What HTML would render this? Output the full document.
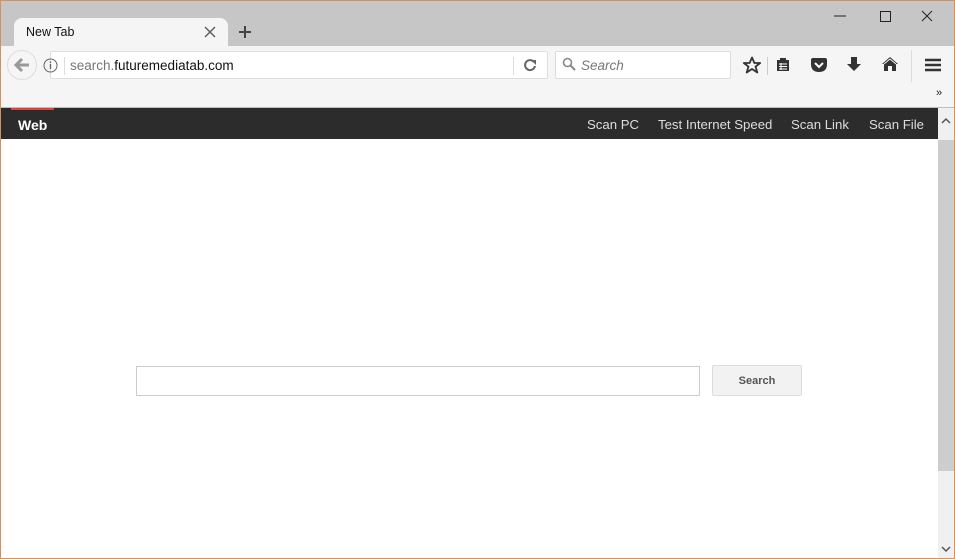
<!DOCTYPE html>
<html><head><meta charset="utf-8"><style>
*{margin:0;padding:0;box-sizing:border-box}
body{width:955px;height:559px;overflow:hidden;font-family:"Liberation Sans",sans-serif;background:#fff;position:relative}
.a{position:absolute}
.n{font-size:13.2px;color:#ddd;top:117px}
</style></head><body>
<div class="a" style="left:0;top:0;width:955px;height:46px;background:#c6c6c6"></div>
<div class="a" style="left:14px;top:18px;width:214px;height:30px;background:#f5f5f5;border-radius:8px 8px 0 0"></div>
<div class="a" style="left:26px;top:25px;font-size:12.5px;color:#111">New Tab</div>
<svg class="a" style="left:203px;top:25px" width="14" height="14"><path d="M2 2L12 12M12 2L2 12" stroke="#555" stroke-width="1.3"/></svg>
<svg class="a" style="left:237px;top:24px" width="16" height="16"><path d="M8 2V14M2 8H14" stroke="#444" stroke-width="2"/></svg>
<svg class="a" style="left:830px;top:8px" width="110" height="16"><path d="M4 8H16" stroke="#222"/><rect x="50.5" y="3.5" width="10" height="10" fill="none" stroke="#222"/><path d="M92 3L102 13M102 3L92 13" stroke="#222"/></svg>
<div class="a" style="left:0;top:46px;width:955px;height:62px;background:#f5f5f5"></div>
<div class="a" style="left:50px;top:51px;width:498px;height:28px;background:#fff;border:1px solid #ddd;border-radius:2px"></div>
<div class="a" style="left:7px;top:50px;width:30px;height:30px;border-radius:50%;background:#f5f5f5;border:1px solid #ddd"></div>
<svg class="a" style="left:13px;top:57px" width="18" height="16"><path d="M9 2L3 8L9 14M3 8H16" stroke="#999" stroke-width="3" fill="none"/></svg>
<svg class="a" style="left:43px;top:58px" width="15" height="15"><circle cx="7.5" cy="7.5" r="6.5" fill="none" stroke="#666"/><path d="M7.5 6V11M7.5 3.5V5" stroke="#666" stroke-width="1.4"/></svg>
<div class="a" style="left:64px;top:57px;width:1px;height:18px;background:#ddd"></div>
<div class="a" style="left:70px;top:58px;font-size:13.5px;color:#777">search.<span style="color:#111">futuremediatab.com</span></div>
<div class="a" style="left:513px;top:57px;width:1px;height:18px;background:#ddd"></div>
<svg class="a" style="left:523px;top:58px" width="14" height="14"><path d="M11 4A5 5 0 1 0 12 8" stroke="#666" stroke-width="2" fill="none"/><path d="M8 2H13V7Z" fill="#666"/></svg>
<div class="a" style="left:555px;top:51px;width:176px;height:28px;background:#fff;border:1px solid #ddd;border-radius:2px"></div>
<svg class="a" style="left:562px;top:57px" width="14" height="14"><circle cx="5.5" cy="5.5" r="4" fill="none" stroke="#888" stroke-width="1.6"/><path d="M8.5 8.5L13 13" stroke="#888" stroke-width="2"/></svg>
<div class="a" style="left:581px;top:58px;font-size:13.5px;color:#777;font-style:italic">Search</div>
<svg class="a" style="left:742px;top:56px" width="20" height="19"><path d="M10 1.5L12.4 7H18.2L13.5 10.6L15.3 16.5L10 13L4.7 16.5L6.5 10.6L1.8 7H7.6Z" fill="none" stroke="#333" stroke-width="1.8" stroke-linejoin="round"/></svg>
<div class="a" style="left:767px;top:57px;width:1px;height:18px;background:#ccc"></div>
<svg class="a" style="left:775px;top:57px" width="16" height="16"><rect x="2" y="3" width="12" height="11" fill="#333"/><rect x="5" y="1" width="6" height="3" fill="#333"/><path d="M4 7H12M4 9.5H12M4 12H12" stroke="#fff"/><path d="M6 6V13" stroke="#fff"/></svg>
<svg class="a" style="left:810px;top:57px" width="18" height="16"><path d="M1 3Q1 1 3 1H15Q17 1 17 3V7Q17 15 9 15Q1 15 1 7Z" fill="#333"/><path d="M5 6L9 10L13 6" stroke="#fff" stroke-width="2" fill="none"/></svg>
<svg class="a" style="left:846px;top:56px" width="16" height="17"><path d="M5 1H11V8H15L8 15L1 8H5Z" fill="#333"/></svg>
<svg class="a" style="left:881px;top:56px" width="18" height="17"><path d="M9 1L17 8H15V15H11V10H7V15H3V8H1Z" fill="#333"/><path d="M3 8L9 3L15 8" stroke="#f5f5f5" stroke-width="1" fill="none"/></svg>
<div class="a" style="left:911px;top:50px;width:1px;height:32px;background:#ddd"></div>
<svg class="a" style="left:924px;top:57px" width="18" height="16"><path d="M1 3H17M1 8H17M1 13H17" stroke="#333" stroke-width="2.6"/></svg>
<div class="a" style="left:936px;top:87px;font-size:11px;color:#222">»</div>
<div class="a" style="left:0;top:107px;width:955px;height:1px;background:#bdbdbd"></div>
<div class="a" style="left:0;top:108px;width:938px;height:31px;background:#2c2c2c"></div>
<div class="a" style="left:11px;top:108px;width:43px;height:2px;background:#d9453a"></div>
<div class="a" style="left:18px;top:117px;font-size:14px;font-weight:bold;color:#fff">Web</div>
<div class="a n" style="left:587px">Scan PC</div>
<div class="a n" style="left:658px">Test Internet Speed</div>
<div class="a n" style="left:791px">Scan Link</div>
<div class="a n" style="left:869px">Scan File</div>
<div class="a" style="left:938px;top:108px;width:16px;height:451px;background:#f0f0f0"></div>
<div class="a" style="left:938px;top:140px;width:16px;height:331px;background:#cdcdcd"></div>
<svg class="a" style="left:941px;top:117px" width="10" height="8"><path d="M1 6L5 2L9 6" stroke="#555" stroke-width="1.5" fill="none"/></svg>
<svg class="a" style="left:941px;top:545px" width="10" height="8"><path d="M1 2L5 6L9 2" stroke="#555" stroke-width="1.5" fill="none"/></svg>
<div class="a" style="left:136px;top:366px;width:564px;height:30px;border:1px solid #ccc;background:#fff"></div>
<div class="a" style="left:712px;top:365px;width:90px;height:31px;border:1px solid #ddd;background:#f2f2f2;border-radius:2px;font-size:11px;font-weight:bold;color:#555;text-align:center;line-height:31px">Search</div>
<div class="a" style="left:0;top:0;width:955px;height:559px;border:1px solid #d4915d"></div>
</body></html>
